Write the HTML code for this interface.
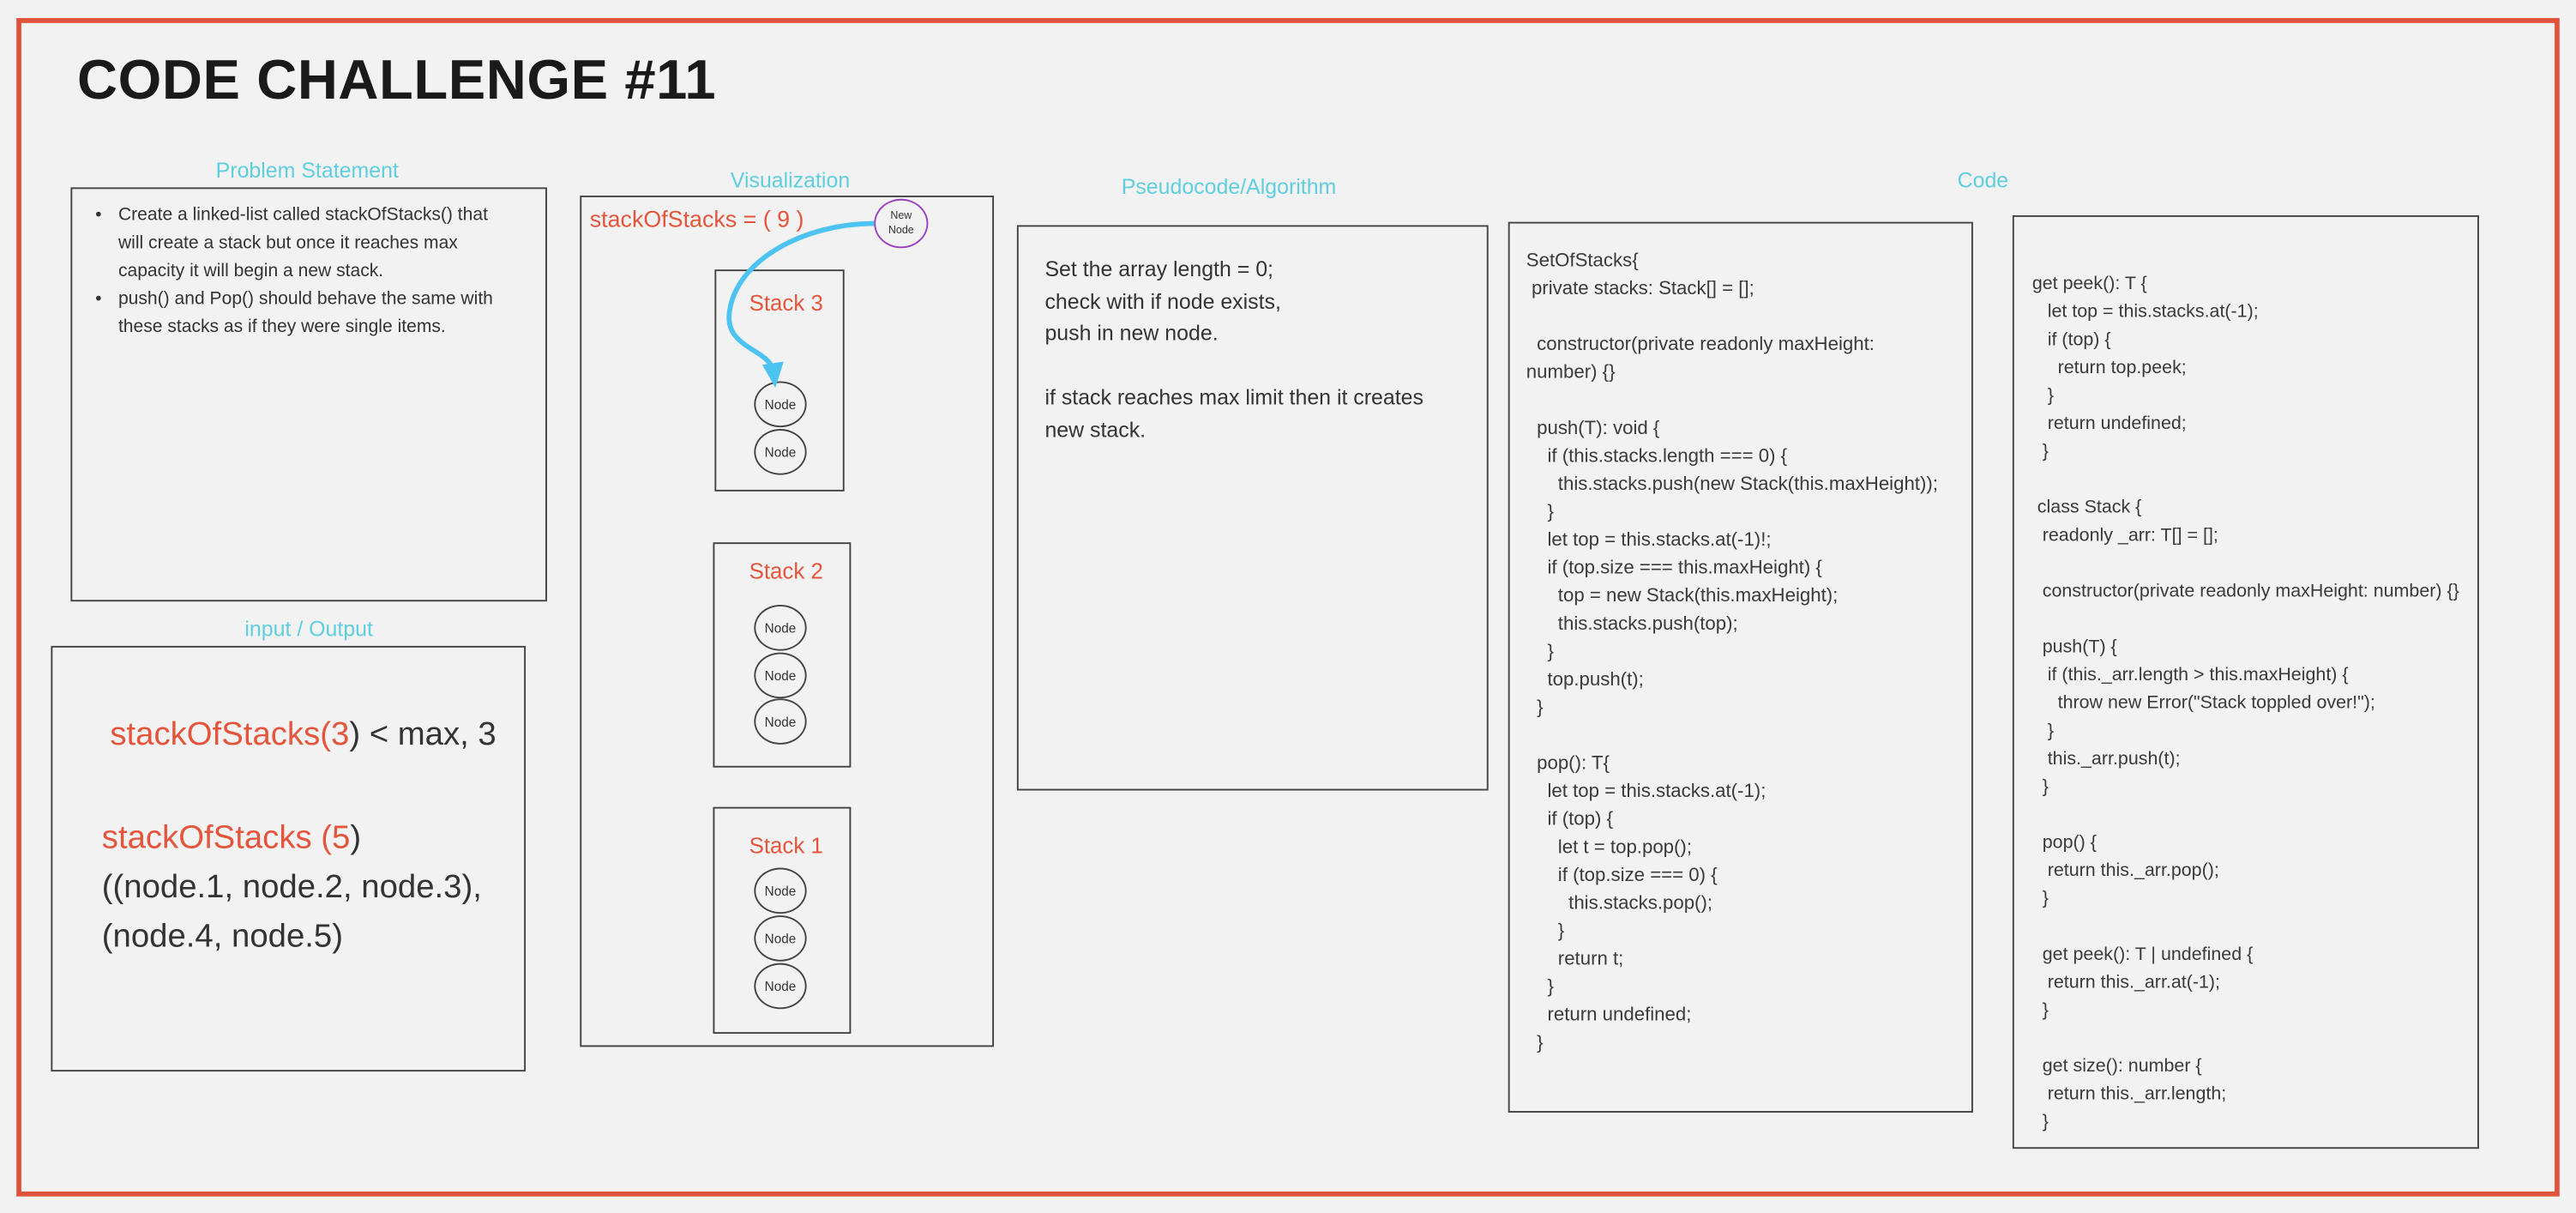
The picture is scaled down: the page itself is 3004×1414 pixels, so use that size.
<!DOCTYPE html>
<html><head><meta charset="utf-8"><style>
html,body{margin:0;padding:0;width:3004px;height:1414px;overflow:hidden;background:#f2f2f2;}
#s{position:absolute;left:0;top:0;width:1568px;height:738px;transform:scale(1.9158);transform-origin:0 0;font-family:"Liberation Sans",sans-serif;color:#333;}
.a{position:absolute;}
.box{position:absolute;border:1.2px solid #444;box-sizing:border-box;}
.lbl{position:absolute;color:#5fcfe0;font-size:13px;transform:translateX(-50%);white-space:nowrap;}
.code{position:absolute;font-size:11.6px;line-height:17px;white-space:pre;color:#3a3a3a;}
.red{color:#e5553c;}
.node{position:absolute;width:32px;height:28px;border:1px solid #444;border-radius:50%;box-sizing:border-box;font-size:8px;display:flex;align-items:center;justify-content:center;background:#f2f2f2;}
.stk{position:absolute;color:#e5553c;font-size:13.5px;}
</style></head><body><div id="s">
<div class="a" style="left:10px;top:11px;width:1548px;height:717px;border:3px solid #e0533a;box-sizing:border-box;"></div>
<div class="a" style="left:47px;top:30px;font-size:34px;font-weight:bold;color:#1a1a1a;letter-spacing:0.3px;">CODE CHALLENGE #11</div>

<div class="lbl" style="left:187px;top:96px;">Problem Statement</div>
<div class="box" style="left:43px;top:114px;width:290px;height:252px;"></div>
<div class="a" style="left:58px;top:123px;width:248px;font-size:11px;line-height:17px;color:#333;">
<div style="position:relative;padding-left:14px;"><span style="position:absolute;left:0;">•</span>Create a linked-list called stackOfStacks() that will create a stack but once it reaches max capacity it will begin a new stack.</div>
<div style="position:relative;padding-left:14px;"><span style="position:absolute;left:0;">•</span>push() and Pop() should behave the same with these stacks as if they were single items.</div>
</div>

<div class="lbl" style="left:188px;top:375px;">input / Output</div>
<div class="box" style="left:31px;top:393px;width:289px;height:259px;"></div>
<div class="a" style="left:67px;top:436px;font-size:20px;color:#333;"><span class="red">stackOfStacks(3</span>) &lt; max, 3</div>
<div class="a" style="left:62px;top:495px;font-size:20px;line-height:30px;color:#333;"><span class="red">stackOfStacks (5</span>)<br>((node.1, node.2, node.3),<br>(node.4, node.5)</div>

<div class="lbl" style="left:481px;top:102px;">Visualization</div>
<div class="box" style="left:353px;top:119px;width:252px;height:518px;"></div>
<div class="a red" style="left:359px;top:125px;font-size:14px;">stackOfStacks = ( 9 )</div>
<div class="a" style="left:532px;top:121px;width:33px;height:30px;border:1.2px solid #9a3fc0;border-radius:50%;box-sizing:border-box;font-size:6.5px;text-align:center;line-height:9px;padding-top:5px;">New<br>Node</div>
<div class="box" style="left:435px;top:164px;width:79px;height:135px;"></div>
<div class="stk" style="left:456px;top:177px;">Stack 3</div>
<div class="node" style="left:459px;top:232px;">Node</div>
<div class="node" style="left:459px;top:261px;">Node</div>
<div class="box" style="left:434px;top:330px;width:84px;height:137px;"></div>
<div class="stk" style="left:456px;top:340px;">Stack 2</div>
<div class="node" style="left:459px;top:368px;">Node</div>
<div class="node" style="left:459px;top:397px;">Node</div>
<div class="node" style="left:459px;top:425px;">Node</div>
<div class="box" style="left:434px;top:491px;width:84px;height:138px;"></div>
<div class="stk" style="left:456px;top:507px;">Stack 1</div>
<div class="node" style="left:459px;top:528px;">Node</div>
<div class="node" style="left:459px;top:557px;">Node</div>
<div class="node" style="left:459px;top:586px;">Node</div>
<svg class="a" style="left:0;top:0;" width="1568" height="738"><path d="M532,136 C490,136 448,158 444,190 C441,212 468,212 471,226" fill="none" stroke="#4cc3f0" stroke-width="3"/><path d="M464,222 L472,236 L477,220 Z" fill="#4cc3f0"/></svg>

<div class="lbl" style="left:748px;top:106px;">Pseudocode/Algorithm</div>
<div class="box" style="left:619px;top:137px;width:287px;height:344px;"></div>
<div class="a" style="left:636px;top:154px;font-size:13px;line-height:19.5px;color:#333;">Set the array length = 0;<br>check with if node exists,<br>push in new node.<br><br>if stack reaches max limit then it creates<br>new stack.</div>

<div class="lbl" style="left:1207px;top:102px;">Code</div>
<div class="box" style="left:918px;top:135px;width:283px;height:542px;"></div>
<div class="code" style="left:929px;top:150px;">SetOfStacks{
 private stacks: Stack[] = [];

  constructor(private readonly maxHeight:
number) {}

  push(T): void {
    if (this.stacks.length === 0) {
      this.stacks.push(new Stack(this.maxHeight));
    }
    let top = this.stacks.at(-1)!;
    if (top.size === this.maxHeight) {
      top = new Stack(this.maxHeight);
      this.stacks.push(top);
    }
    top.push(t);
  }

  pop(): T{
    let top = this.stacks.at(-1);
    if (top) {
      let t = top.pop();
      if (top.size === 0) {
        this.stacks.pop();
      }
      return t;
    }
    return undefined;
  }</div>
<div class="box" style="left:1225px;top:131px;width:284px;height:568px;"></div>
<div class="code" style="left:1237px;top:165px;font-size:11.2px;">get peek(): T {
   let top = this.stacks.at(-1);
   if (top) {
     return top.peek;
   }
   return undefined;
  }

 class Stack {
  readonly _arr: T[] = [];

  constructor(private readonly maxHeight: number) {}

  push(T) {
   if (this._arr.length &gt; this.maxHeight) {
     throw new Error("Stack toppled over!");
   }
   this._arr.push(t);
  }

  pop() {
   return this._arr.pop();
  }

  get peek(): T | undefined {
   return this._arr.at(-1);
  }

  get size(): number {
   return this._arr.length;
  }</div>
</div></body></html>
